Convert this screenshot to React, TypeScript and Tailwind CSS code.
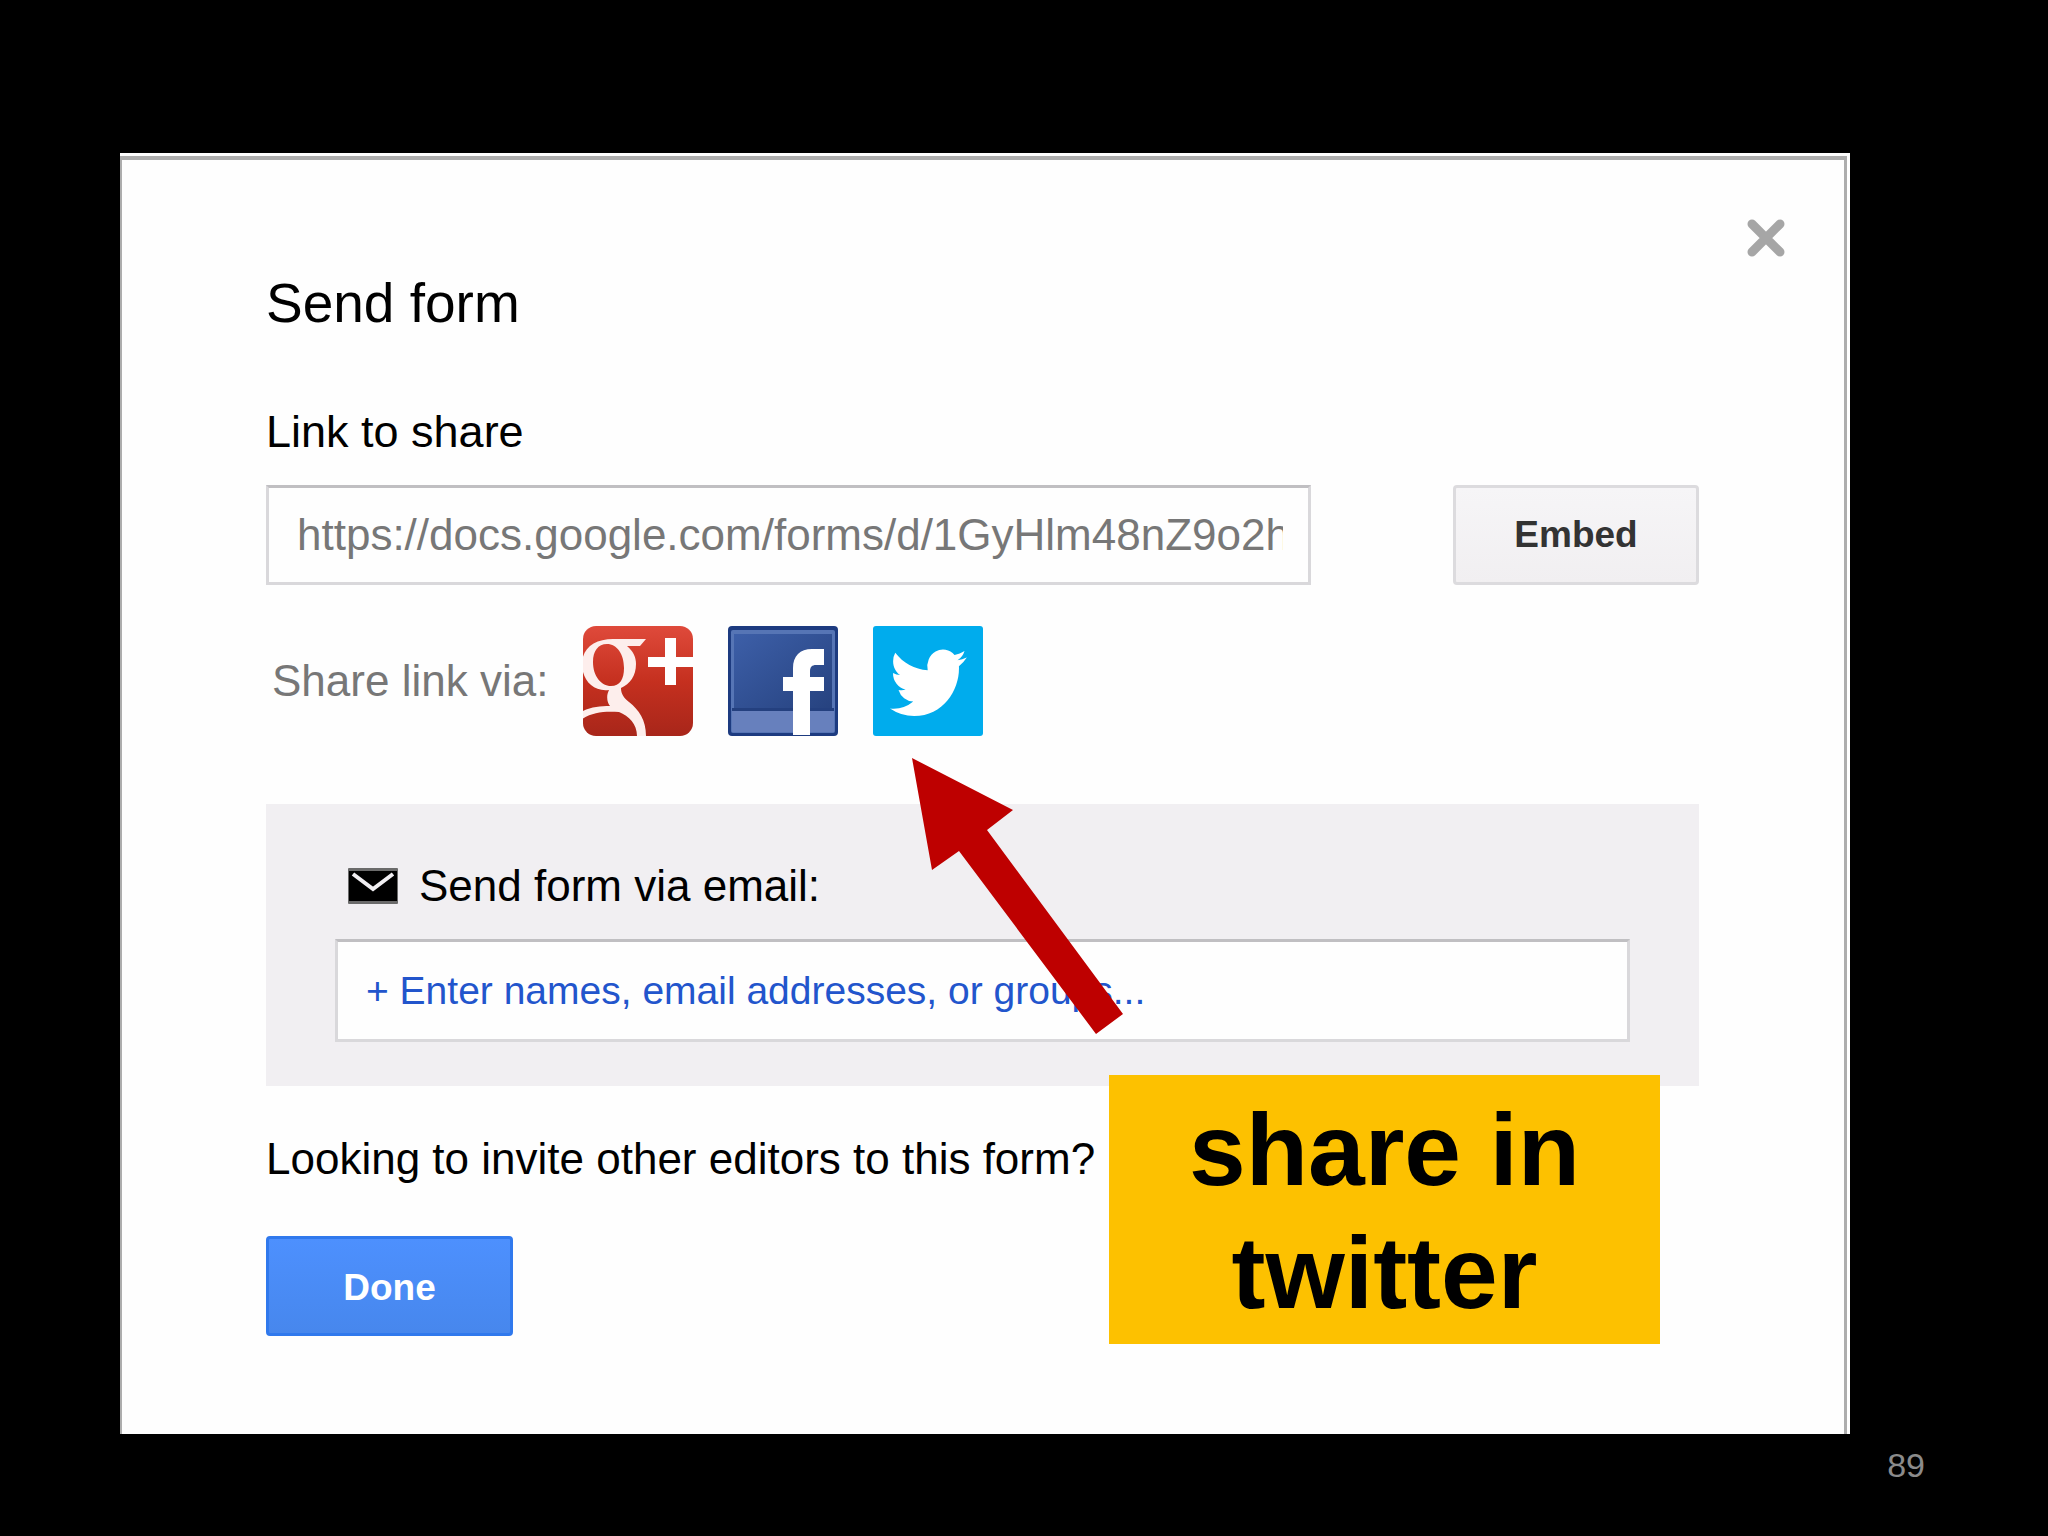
import { useState } from 'react';

const FORM_URL = 'https://docs.google.com/forms/d/1GyHlm48nZ9o2hKq7xTzVb3/viewform';

const GooglePlusIcon = () => (
    <svg viewBox="0 0 110 110" className="size-[110px]" aria-hidden="true">
        <defs>
            <linearGradient id="gplus" x1="0" y1="0" x2="0" y2="1">
                <stop offset="0" stopColor="#df4a3b" />
                <stop offset="0.5" stopColor="#c5301f" />
                <stop offset="1" stopColor="#a8261a" />
            </linearGradient>
            <clipPath id="gplusClip">
                <rect width="110" height="110" rx="13" />
            </clipPath>
        </defs>
        <g clipPath="url(#gplusClip)">
            <rect width="110" height="110" fill="url(#gplus)" />
            <path
                d="M30 13H63L57 20H44C50 25 53 31 53 38C53 50 47 58 38 62C38 68 41 72 46 76C56 84 63 94 63 110H54C54 98 46 90 36 86C22 85 8 86 -2 94V86C7 81 17 80 27 80C24 76 23 70 26 64C10 66 -1 54 -1 38C-1 22 12 13 30 13ZM24 18C15 18 10 25 10 36C10 50 18 60 28 60C37 60 41 53 41 42C41 28 34 18 24 18Z"
                fill="#fdeeec"
            />
            <path d="M82 12H93V31H110V41H93V59H82V41H65V31H82Z" fill="#fff" />
        </g>
    </svg>
);

const FacebookIcon = () => (
    <svg viewBox="0 0 110 110" className="size-[110px]" aria-hidden="true">
        <defs>
            <linearGradient id="fb" x1="0" y1="0" x2="1" y2="1">
                <stop offset="0" stopColor="#3d5fa8" />
                <stop offset="1" stopColor="#26427f" />
            </linearGradient>
        </defs>
        <rect width="110" height="110" rx="4" fill="#1d3b80" />
        <rect x="3" y="4" width="104" height="103" rx="2" fill="#5675b5" />
        <rect x="6" y="8" width="98" height="76" fill="url(#fb)" />
        <rect x="4" y="82" width="102" height="3" fill="#24407f" />
        <rect x="4" y="85" width="102" height="21" fill="#6780bd" />
        <path
            d="M65 109V65H55V51H65V42C65 30 72 23 84 23H96V39H88C84 39 82 41 82 45V51H96V65H82V109Z"
            fill="#fff"
        />
    </svg>
);

const TwitterIcon = () => (
    <svg viewBox="0 0 110 110" className="size-[110px]" aria-hidden="true">
        <rect width="110" height="110" rx="3" fill="#00aced" />
        <path
            transform="translate(17 16) scale(3.2 3.4)"
            d="M23.953 4.57a10 10 0 01-2.825.775 4.958 4.958 0 002.163-2.723c-.951.555-2.005.959-3.127 1.184a4.92 4.92 0 00-8.384 4.482C7.69 8.095 4.067 6.13 1.64 3.162a4.822 4.822 0 00-.666 2.475c0 1.71.87 3.213 2.188 4.096a4.904 4.904 0 01-2.228-.616v.06a4.923 4.923 0 003.946 4.827 4.996 4.996 0 01-2.212.085 4.936 4.936 0 004.604 3.417 9.867 9.867 0 01-6.102 2.105c-.39 0-.779-.023-1.17-.067a13.995 13.995 0 007.557 2.209c9.053 0 13.998-7.496 13.998-13.985 0-.21 0-.42-.015-.63A9.935 9.935 0 0024 4.59z"
            fill="#fff"
        />
    </svg>
);

const EnvelopeIcon = () => (
    <svg viewBox="0 0 50 36" className="h-[36px] w-[50px]" aria-hidden="true">
        <rect width="50" height="36" rx="1" fill="#6b6b6b" />
        <rect x="1" y="3" width="48" height="30" fill="#000" />
        <path d="M5 6L25 21L45 6" fill="none" stroke="#f1eff2" strokeWidth="4" />
    </svg>
);

const shareTargets = [
    { name: 'Google+', Icon: GooglePlusIcon },
    { name: 'Facebook', Icon: FacebookIcon },
    { name: 'Twitter', Icon: TwitterIcon },
];

const fieldBorder = 'border-3 border-[#d9d8db] border-t-[#c0bfc2] outline-none';

function SendFormDialog() {
    const [emails, setEmails] = useState('');

    return (
        <section role="dialog" aria-labelledby="dialog-title" className="relative bg-[#fefefe] pt-[3px] pr-[3px]">
            <div className="border-t-4 border-r-3 border-l-2 border-[#adadad] pt-[113px] pr-[145px] pb-[98px] pl-[144px]">
                <h1 id="dialog-title" className="text-[55px] leading-[60px]">Send form</h1>

                <label htmlFor="link" className="mt-[74px] block text-[45px] leading-[50px]">Link to share</label>
                <div className="mt-[28px] flex gap-[142px]">
                    <input
                        id="link"
                        readOnly
                        value={FORM_URL}
                        className={`h-[100px] min-w-0 flex-1 pr-[25px] pl-[28px] text-[44px] text-[#777] ${fieldBorder}`}
                    />
                    <button className="h-[100px] w-[246px] rounded-[4px] border-3 border-[#dcdbde] bg-linear-to-b from-[#f6f5f7] to-[#f1eff1] text-[37px] font-bold text-[#333]">
                        Embed
                    </button>
                </div>

                {/* Social links */}
                <div className="mt-[41px] flex items-center gap-[35px] pl-[6px]">
                    <span className="text-[44px] leading-[50px] text-[#777]">Share link via:</span>
                    {shareTargets.map(({ name, Icon }) => (
                        <a key={name} href="#share" aria-label={name}>
                            <Icon />
                        </a>
                    ))}
                </div>

                {/* Email invite */}
                <div className="mt-[68px] bg-[#f1eff2] px-[69px] pt-[57px] pb-[44px]">
                    <label htmlFor="emails" className="flex items-center gap-[21px] pl-[13px] text-[44px] leading-[50px]">
                        <EnvelopeIcon />
                        Send form via email:
                    </label>
                    <input
                        id="emails"
                        value={emails}
                        onChange={(e) => setEmails(e.target.value)}
                        placeholder="+ Enter names, email addresses, or groups..."
                        className={`mt-[28px] block h-[103px] w-full bg-[#fefefe] px-[28px] text-[39px] placeholder:text-[#2255cc] ${fieldBorder}`}
                    />
                </div>

                <p className="mt-[48px] text-[44px] leading-[50px]">Looking to invite other editors to this form?</p>

                <button className="mt-[52px] block h-[100px] w-[247px] rounded-[4px] border-3 border-[#3079ed] bg-linear-to-b from-[#4d90fe] to-[#4787ed] pt-1 text-[37px] font-bold text-white">
                    Done
                </button>
            </div>

            <button aria-label="Close" className="absolute top-[66px] right-[65px]">
                <svg viewBox="0 0 38 38" className="size-[38px]" aria-hidden="true">
                    <path d="M5 5L33 33M33 5L5 33" stroke="#a6a6a6" strokeWidth="9" strokeLinecap="round" />
                </svg>
            </button>

            {/* Callout over the dialog */}
            <svg viewBox="0 0 211 276" className="absolute top-[605px] left-[792px] h-[276px] w-[211px]" aria-hidden="true">
                <path d="M0 0L101 52L75 72L211 256L184 276L47 93L20 112Z" fill="#be0000" />
            </svg>
            <div className="absolute top-[922px] left-[989px] w-[551px] bg-[#fdc100] px-12 pt-[14px] pb-[9px] text-center text-[102px] leading-[123px] font-bold">
                share in twitter
            </div>
        </section>
    );
}

export default function App() {
    return (
        <main className="min-h-screen bg-black pt-[153px] pr-[123px] pl-[120px] font-['Liberation_Sans',Arial,sans-serif] text-black">
            <div className="mr-[75px]">
                <SendFormDialog />
            </div>
            <footer className="mt-[11px] text-right text-[34px] leading-[40px] text-[#8b8b8b]">89</footer>
        </main>
    );
}
